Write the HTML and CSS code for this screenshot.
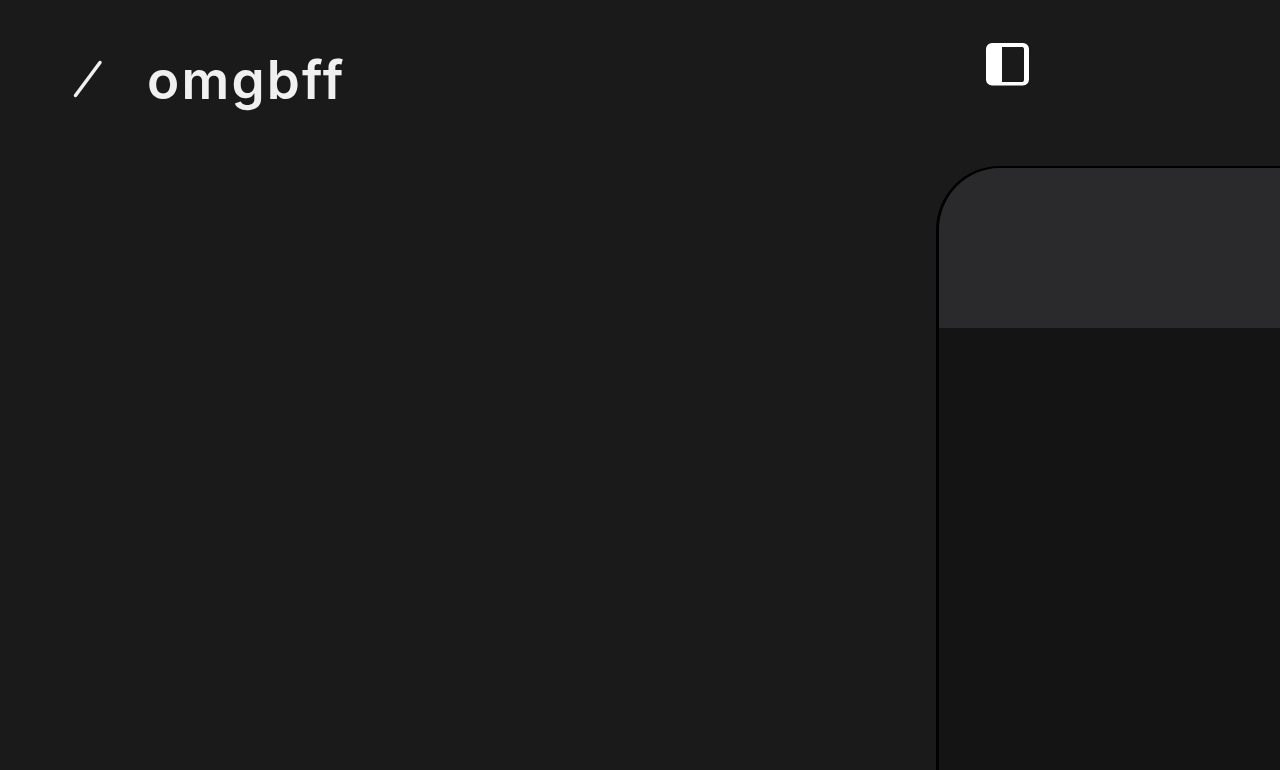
FILE: index.html
```html
<!DOCTYPE html>
<html lang="en">
<head>
  <meta charset="UTF-8">
  <meta name="viewport" content="width=device-width, initial-scale=1.0">
  <title>omgbff</title>
  <link rel="stylesheet" href="styles.css">
</head>
<body>

<div class="app">
  <!-- Sidebar -->
  <aside class="sidebar">
    <div class="brand">
      <svg class="slash" width="30" height="40" viewBox="0 0 30 40" aria-hidden="true">
        <line x1="2.500" y1="36.500" x2="27" y2="3.500" />
      </svg>
      <span class="brand-name">omgbff</span>
    </div>
  </aside>

  <!-- Main area -->
  <main class="main">
    <div class="toolbar">
      <button class="toggle" aria-label="Toggle sidebar">
        <svg width="44" height="44" viewBox="0 0 44 44" aria-hidden="true">
          <path fill-rule="evenodd" d="M6 1h31a6 6 0 0 1 6 6v30.500a6 6 0 0 1-6 6h-31a6 6 0 0 1-6-6v-30.500a6 6 0 0 1 6-6zM16 5v35h20.500a2 2 0 0 0 1.500-2v-31a2 2 0 0 0-1.500-2z" />
        </svg>
      </button>
    </div>
    <section class="window">
      <div class="window-header"></div>
      <div class="window-body"></div>
    </section>
  </main>
</div>

</body>
</html>
```

FILE: styles.css
```css
* {
  box-sizing: border-box;
}

body {
  margin: 0;
  padding: 0;
  background: #1a1a1a;
  font-family: 'Inter', 'Liberation Sans', sans-serif;
  overflow: hidden;
}

.app {
  display: flex;
  height: 100vh;
  overflow: hidden;
}

/* Sidebar */
.sidebar {
  flex: 0 0 936px;
  padding: 49px 0 0 73px;
}

.brand {
  display: flex;
  align-items: center;
  gap: 44px;
  height: 60px;
}

.slash {
  flex: none;
}

.slash line {
  stroke: #f0f0f0;
  stroke-width: 3.500;
  stroke-linecap: round;
}

.brand-name {
  padding-top: 1px;
  color: #f0f0f0;
  font-size: 53px;
  font-weight: 600;
  font-variant-ligatures: none;
  letter-spacing: 2.200px;
  line-height: 60px;
}

/* Main area */
.main {
  flex: 1;
  display: flex;
  flex-direction: column;
  min-width: 0;
}

.toolbar {
  flex: 0 0 166px;
  padding: 42px 0 0 50px;
}

.toggle {
  display: block;
  padding: 0;
  background: none;
  border: none;
}

.toggle svg {
  display: block;
  fill: #fff;
}

/* Window */
.window {
  flex: 1;
  display: flex;
  flex-direction: column;
  width: 420px;
  border-top: 2.500px solid #000;
  border-left: 3px solid #000;
  border-radius: 64px 0 0 0;
  overflow: hidden;
  background: #141414;
}

.window-header {
  flex: 0 0 159.500px;
  background: #2a2a2c;
}

.window-body {
  flex: 1;
}
```
